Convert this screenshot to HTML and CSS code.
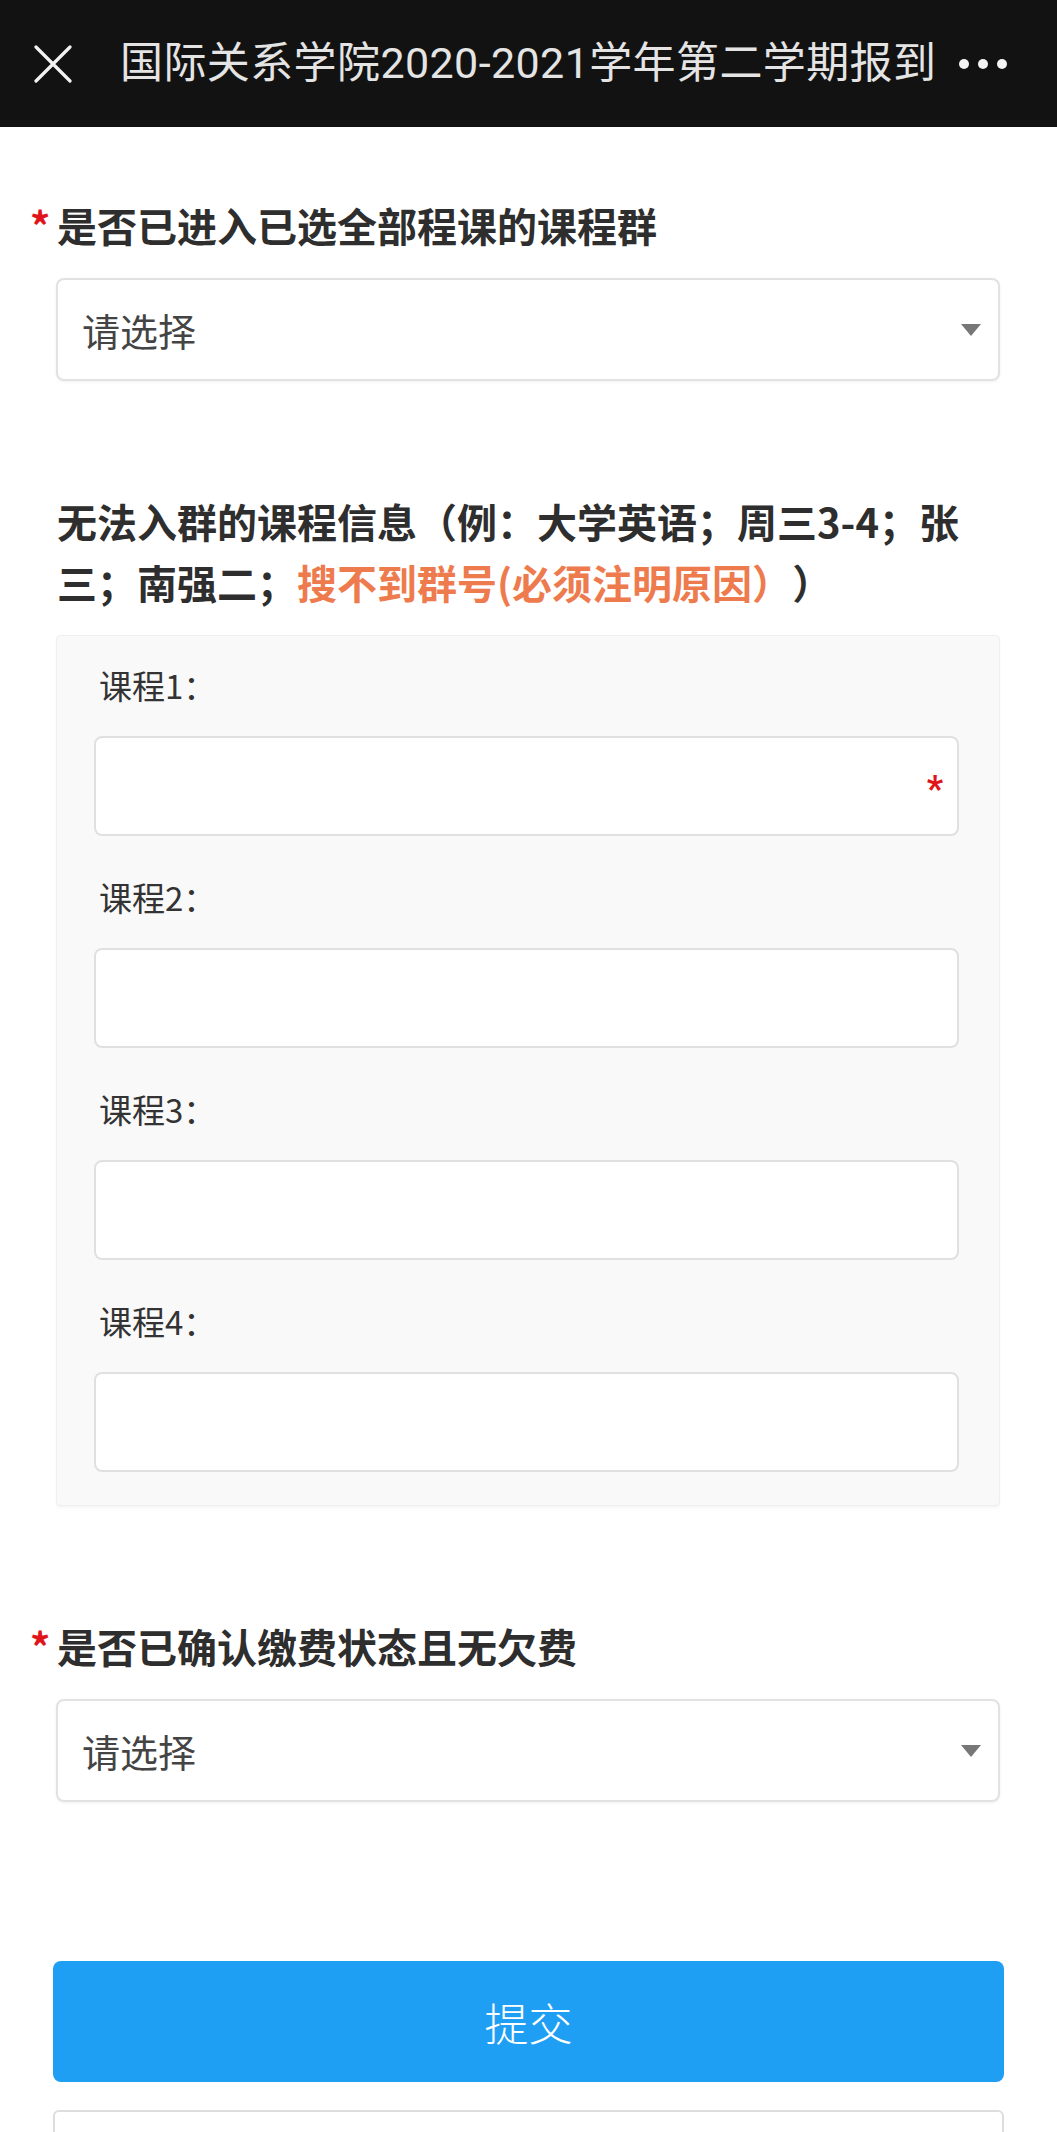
FILE: index.html
```html
<!DOCTYPE html>
<html lang="zh-CN">
<head>
<meta charset="utf-8">
<title>国际关系学院2020-2021学年第二学期报到</title>
<link rel="stylesheet" href="styles.css">
</head>
<body>
<header class="topbar">
  <svg class="close-icon" viewBox="0 0 38 38" width="38" height="38" aria-hidden="true">
    <path d="M2 2 L36 36 M36 2 L2 36" stroke="#f2f2f2" stroke-width="3.2" stroke-linecap="round" fill="none"/>
  </svg>
  <div class="topbar-title">国际关系学院2020-2021学年第二学期报到</div>
  <div class="more"><span class="dot"></span><span class="dot"></span><span class="dot"></span></div>
</header>

<main class="form">
  <section class="field">
    <div class="q-label"><span class="req">*</span>是否已进入已选全部程课的课程群</div>
    <div class="select"><span class="placeholder">请选择</span><span class="caret"></span></div>
  </section>

  <section class="field">
    <div class="q-label q-wrap">无法入群的课程信息（例：大学英语；周三3-4；张三；南强二；<span class="hint">搜不到群号(必须注明原因）</span>）</div>
    <div class="panel">
      <div class="sub-field">
        <div class="sub-label">课程1：</div>
        <div class="input"><span class="input-req">*</span></div>
      </div>
      <div class="sub-field">
        <div class="sub-label">课程2：</div>
        <div class="input"></div>
      </div>
      <div class="sub-field">
        <div class="sub-label">课程3：</div>
        <div class="input"></div>
      </div>
      <div class="sub-field">
        <div class="sub-label">课程4：</div>
        <div class="input"></div>
      </div>
    </div>
  </section>

  <section class="field">
    <div class="q-label"><span class="req">*</span>是否已确认缴费状态且无欠费</div>
    <div class="select"><span class="placeholder">请选择</span><span class="caret"></span></div>
  </section>

  <div class="actions">
    <button class="submit" type="button">提交</button>
    <div class="next-box"></div>
  </div>
</main>
</body>
</html>
```

FILE: styles.css
```css
* { box-sizing: border-box; }

html, body {
  margin: 0;
  padding: 0;
  background: #ffffff;
  font-family: Roboto, "Noto Sans CJK SC", sans-serif;
  color: #333333;
}

body {
  height: 2132px;
  overflow: hidden;
}

.topbar {
  height: 127px;
  background: #121212;
  display: flex;
  align-items: center;
  padding: 0 0 0 34px;
}

.close-icon {
  flex: none;
  display: block;
}

.topbar-title {
  margin-left: 48px;
  font-size: 43px;
  color: #e4e4e4;
  white-space: nowrap;
  letter-spacing: 0.4px;
  line-height: 1;
}

.more {
  margin-left: auto;
  margin-right: 50px;
  display: flex;
  gap: 9px;
  align-items: center;
}

.dot {
  width: 10px;
  height: 10px;
  border-radius: 50%;
  background: #f4f4f4;
}

.form {
  padding: 68px 57px 0 56px;
  display: flex;
  flex-direction: column;
  gap: 110px;
}

.field {
  display: flex;
  flex-direction: column;
  gap: 22px;
}

.q-label {
  font-family: "Noto Sans CJK SC", sans-serif;
  font-size: 40px;
  font-weight: 700;
  line-height: 61px;
  color: #2e2e2e;
  padding-left: 1px;
  text-spacing-trim: space-all;
}

.q-wrap {
  padding-right: 24px;
}

.req {
  display: inline-block;
  width: 27px;
  margin-left: -27px;
  color: #e0151b;
  font-weight: 700;
  font-size: 40px;
}

.hint {
  color: #ee7b4e;
}

.select {
  height: 103px;
  border: 2px solid #e2e2e2;
  border-radius: 8px;
  background: #ffffff;
  box-shadow: 0 1px 3px rgba(0, 0, 0, 0.06);
  display: flex;
  align-items: center;
  padding: 0 17px 0 24px;
}

.placeholder {
  font-family: "Noto Sans CJK SC", sans-serif;
  font-size: 38px;
  color: #444444;
}

.caret {
  margin-left: auto;
  width: 0;
  height: 0;
  border-left: 10px solid transparent;
  border-right: 10px solid transparent;
  border-top: 12px solid #777777;
}

.panel {
  background: #f9f9f9;
  border: 1px solid #efefef;
  box-shadow: 0 2px 3px rgba(0, 0, 0, 0.04);
  border-radius: 4px;
  padding: 25px 40px 33px 37px;
  display: flex;
  flex-direction: column;
  gap: 37px;
}

.sub-field {
  display: flex;
  flex-direction: column;
  gap: 27px;
}

.sub-label {
  font-family: "Noto Sans CJK SC", sans-serif;
  font-size: 33px;
  line-height: 48px;
  color: #333333;
  padding-left: 5px;
}

.input {
  height: 100px;
  background: #ffffff;
  border: 2px solid #e0e0e0;
  border-radius: 8px;
  display: flex;
  align-items: center;
  justify-content: flex-end;
  padding-right: 14px;
}

.input-req {
  color: #e0151b;
  font-size: 36px;
  font-weight: 700;
  margin-top: 6px;
}

.actions {
  margin-top: 49px;
  margin-left: -3px;
  margin-right: -4px;
  display: flex;
  flex-direction: column;
  gap: 28px;
}

.submit {
  height: 121px;
  border: none;
  border-radius: 8px;
  background: #1f9ff4;
  color: #ffffff;
  font-family: "Noto Sans CJK SC", sans-serif;
  font-size: 44px;
  font-weight: 300;
  cursor: pointer;
}

.next-box {
  height: 80px;
  border: 2px solid #dddddd;
  border-radius: 6px 6px 0 0;
  background: #ffffff;
}
```
